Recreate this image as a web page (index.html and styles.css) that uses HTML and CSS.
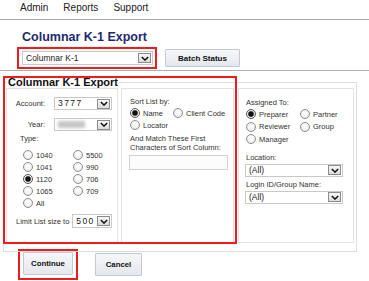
FILE: index.html
```html
<!DOCTYPE html>
<html lang="en">
<head>
<meta charset="utf-8">
<title>Columnar K-1 Export</title>
<link rel="stylesheet" href="styles.css">
</head>
<body>
<nav class="topnav">
  <a class="nav-link">Admin</a>
  <a class="nav-link">Reports</a>
  <a class="nav-link">Support</a>
</nav>

<section class="page-head">
  <h1 class="page-title">Columnar K-1 Export</h1>
  <div class="toolbar">
    <div class="hl-box hl-select">
      <div class="select select-report">
        <span class="select-text">Columnar K-1</span>
        <span class="select-arrow"><svg viewBox="0 0 10 6" width="8" height="5"><path d="M1 1 L5 5 L9 1" fill="none" stroke="#111" stroke-width="1.8"/></svg></span>
      </div>
    </div>
    <button class="btn btn-batch">Batch Status</button>
  </div>
</section>

<main class="content">
  <div class="fs-wrap">
    <fieldset class="export">
      <legend class="export-legend">Columnar K-1 Export</legend>
      <div class="panels">
        <div class="panel panel-left">
          <div class="field-grid">
            <label class="field-label">Account:</label>
            <div class="select select-small">
              <span class="select-text num">3777</span>
              <span class="select-arrow"><svg viewBox="0 0 10 6" width="8" height="5"><path d="M1 1 L5 5 L9 1" fill="none" stroke="#111" stroke-width="1.8"/></svg></span>
            </div>
            <label class="field-label">Year:</label>
            <div class="select select-small">
              <span class="select-text"><span class="blurred"></span></span>
              <span class="select-arrow"><svg viewBox="0 0 10 6" width="8" height="5"><path d="M1 1 L5 5 L9 1" fill="none" stroke="#111" stroke-width="1.8"/></svg></span>
            </div>
          </div>
          <div class="type-label">Type:</div>
          <div class="type-grid">
            <label class="radio"><input type="radio" name="type"><span>1040</span></label>
            <label class="radio"><input type="radio" name="type"><span>5500</span></label>
            <label class="radio"><input type="radio" name="type"><span>1041</span></label>
            <label class="radio"><input type="radio" name="type"><span>990</span></label>
            <label class="radio"><input type="radio" name="type" checked><span>1120</span></label>
            <label class="radio"><input type="radio" name="type"><span>706</span></label>
            <label class="radio"><input type="radio" name="type"><span>1065</span></label>
            <label class="radio"><input type="radio" name="type"><span>709</span></label>
            <label class="radio"><input type="radio" name="type"><span>All</span></label>
          </div>
          <div class="limit-row">
            <span class="limit-label">Limit List size to</span>
            <div class="select select-limit">
              <span class="select-text num">500</span>
              <span class="select-arrow"><svg viewBox="0 0 10 6" width="8" height="5"><path d="M1 1 L5 5 L9 1" fill="none" stroke="#111" stroke-width="1.8"/></svg></span>
            </div>
          </div>
        </div>

        <div class="panel panel-mid">
          <div class="section-label">Sort List by:</div>
          <div class="radio-grid sort-grid">
            <label class="radio"><input type="radio" name="sort" checked><span>Name</span></label>
            <label class="radio"><input type="radio" name="sort"><span>Client Code</span></label>
            <label class="radio"><input type="radio" name="sort"><span>Locator</span></label>
          </div>
          <div class="match-label">And Match These First<br>Characters of Sort Column:</div>
          <div class="text-input"></div>
        </div>

        <div class="panel panel-right">
          <div class="section-label">Assigned To:</div>
          <div class="radio-grid assign-grid">
            <label class="radio"><input type="radio" name="assign" checked><span>Preparer</span></label>
            <label class="radio"><input type="radio" name="assign"><span>Partner</span></label>
            <label class="radio"><input type="radio" name="assign"><span>Reviewer</span></label>
            <label class="radio"><input type="radio" name="assign"><span>Group</span></label>
            <label class="radio"><input type="radio" name="assign"><span>Manager</span></label>
          </div>
          <div class="section-label loc-label">Location:</div>
          <div class="select select-wide">
            <span class="select-text">(All)</span>
            <span class="select-arrow"><svg viewBox="0 0 10 6" width="8" height="5"><path d="M1 1 L5 5 L9 1" fill="none" stroke="#111" stroke-width="1.8"/></svg></span>
          </div>
          <div class="section-label login-label">Login ID/Group Name:</div>
          <div class="select select-wide">
            <span class="select-text">(All)</span>
            <span class="select-arrow"><svg viewBox="0 0 10 6" width="8" height="5"><path d="M1 1 L5 5 L9 1" fill="none" stroke="#111" stroke-width="1.8"/></svg></span>
          </div>
        </div>
      </div>
    </fieldset>
    <div class="hl-overlay"></div>
  </div>

  <div class="actions">
    <div class="hl-box hl-continue">
      <button class="btn btn-action">Continue</button>
    </div>
    <button class="btn btn-action btn-cancel">Cancel</button>
  </div>
</main>
</body>
</html>
```

FILE: styles.css
```css
* { box-sizing: border-box; }

html, body {
  margin: 0;
  padding: 0;
  background: #fff;
  font-family: "Liberation Sans", Arial, sans-serif;
  color: #333;
  width: 369px;
  height: 281px;
  overflow: hidden;
}

.topnav {
  display: flex;
  height: 20px;
  padding-left: 20px;
  gap: 15px;
  align-items: center;
  border-bottom: 1px solid #a9a9a9;
  font-size: 10px;
  padding-bottom: 5px;
}
.nav-link { color: #222; }

.page-head {
  border-bottom: 1px solid #b0b0b0;
  padding: 10px 0 1px 0;
}

.page-title {
  margin: 0 0 2px 22px;
  font-size: 12.5px;
  line-height: 15px;
  font-weight: bold;
  color: #1d2a72;
}

.toolbar {
  display: flex;
  align-items: center;
  padding-left: 17px;
  gap: 8px;
}

.hl-box {
  border: 2px solid #ee1c1c;
}
.hl-select {
  padding: 2px 2px 2px 3px;
  width: 140px;
}

.select {
  display: flex;
  align-items: center;
  justify-content: space-between;
  background: #fff;
  border: 1px solid #c9c9c9;
  height: 13px;
  padding: 0 1px 0 3px;
  font-size: 8.5px;
  color: #222;
}
.select-report { width: 131px; height: 14px; }
.select-text { line-height: 11px; }
.select-text.num { font-size: 8.5px; letter-spacing: 1.4px; }
.select-arrow {
  display: flex;
  align-items: center;
  justify-content: center;
  width: 13px;
  height: 10px;
  border: 1px solid #8c8c8c;
  background: linear-gradient(#f7f7f7, #dcdcdc);
}

.btn {
  font-family: "Liberation Sans", Arial, sans-serif;
  font-weight: bold;
  font-size: 8px;
  color: #111;
  background: linear-gradient(#f6f7fa, #e4e7ee);
  border: 1px solid #c4c8d2;
  border-radius: 1px;
  padding: 0;
  margin: 0;
}
.btn-batch { width: 75px; height: 18px; }

.content {
  padding-top: 5px;
}

.fs-wrap {
  position: relative;
  margin-left: 3px;
  width: 354px;
}

.export {
  margin: 0;
  border: 1px solid #dedede;
  padding: 0 2px 8px 2px;
  min-width: 0;
}
.export-legend {
  padding: 0 1px;
  margin-left: 1px;
  font-size: 11px;
  line-height: 12px;
  font-weight: bold;
  color: #111;
}

.hl-overlay {
  position: absolute;
  left: 0;
  top: 0;
  width: 234px;
  height: 168px;
  border: 2px solid #ee1c1c;
  pointer-events: none;
}

.panels {
  display: flex;
  gap: 3px;
  height: 155px;
}
.panel {
  border: 1px solid #e2e2e2;
  background: #fff;
  font-size: 7.5px;
  color: #333;
}
.panel-left { width: 115px; padding: 8px 0 0 6px; }
.panel-mid { width: 113px; padding: 8px 0 0 7px; }
.panel-right { width: 116px; margin-left: 1px; padding: 9px 0 0 6px; }

.field-grid {
  display: grid;
  grid-template-columns: 32px 58px;
  column-gap: 9px;
  row-gap: 8px;
  align-items: center;
}
.field-label { text-align: right; color: #333; }
.select-small { width: 58px; height: 13px; }
.blurred {
  display: inline-block;
  width: 27px;
  height: 7px;
  margin-top: 2px;
  background: #c6c6c6;
  filter: blur(1.4px);
}

.type-label { margin: 3px 0 0 7px; line-height: 10px; }

.type-grid {
  display: grid;
  grid-template-columns: 50px 40px;
  margin: 5px 0 0 10px;
  grid-auto-rows: 12px;
}

.radio {
  display: flex;
  align-items: center;
  gap: 3px;
  white-space: nowrap;
  color: #333;
}
.radio input {
  appearance: none;
  -webkit-appearance: none;
  margin: 0;
  width: 10px;
  height: 10px;
  border-radius: 50%;
  border: 1px solid #8e8e8e;
  background: radial-gradient(circle at 50% 40%, #ffffff 0, #f4f4f4 50%, #d8d8d8 100%);
  flex: none;
}
.radio input:checked {
  border-color: #555;
  background: radial-gradient(circle, #111 0 2.2px, #777 2.8px, #eee 3.4px, #fff 100%);
}

.limit-row {
  display: flex;
  align-items: center;
  gap: 3px;
  margin: 5px 0 0 3px;
}
.select-limit { width: 40px; height: 14px; padding-left: 3px; }

.section-label { line-height: 9px; margin-left: 1px; }
.radio-grid { display: grid; grid-auto-rows: 12px; margin: 1px 0 0 1px; }
.sort-grid { grid-template-columns: 43px 60px; }
.assign-grid { grid-template-columns: 54px 56px; grid-auto-rows: 12.5px; }

.match-label { line-height: 8.5px; margin: 4px 0 0 1px; }
.text-input {
  width: 99px;
  height: 15px;
  margin-top: 3px;
  border: 1px solid #d2d2d2;
  background: #fcfcfc;
}

.loc-label { margin-top: 7px; }
.select-wide { width: 98px; height: 13px; margin-top: 2px; }
.login-label { margin-top: 3px; }

.actions {
  display: flex;
  align-items: flex-start;
  gap: 17px;
  padding: 0 0 0 18px;
}
.hl-continue {
  margin-top: -3px;
  padding: 1px 3px 3px 3px;
}
.btn-action { width: 50px; height: 23px; font-size: 7.8px; }
.btn-cancel { width: 47px; margin-top: 1px; }
```
